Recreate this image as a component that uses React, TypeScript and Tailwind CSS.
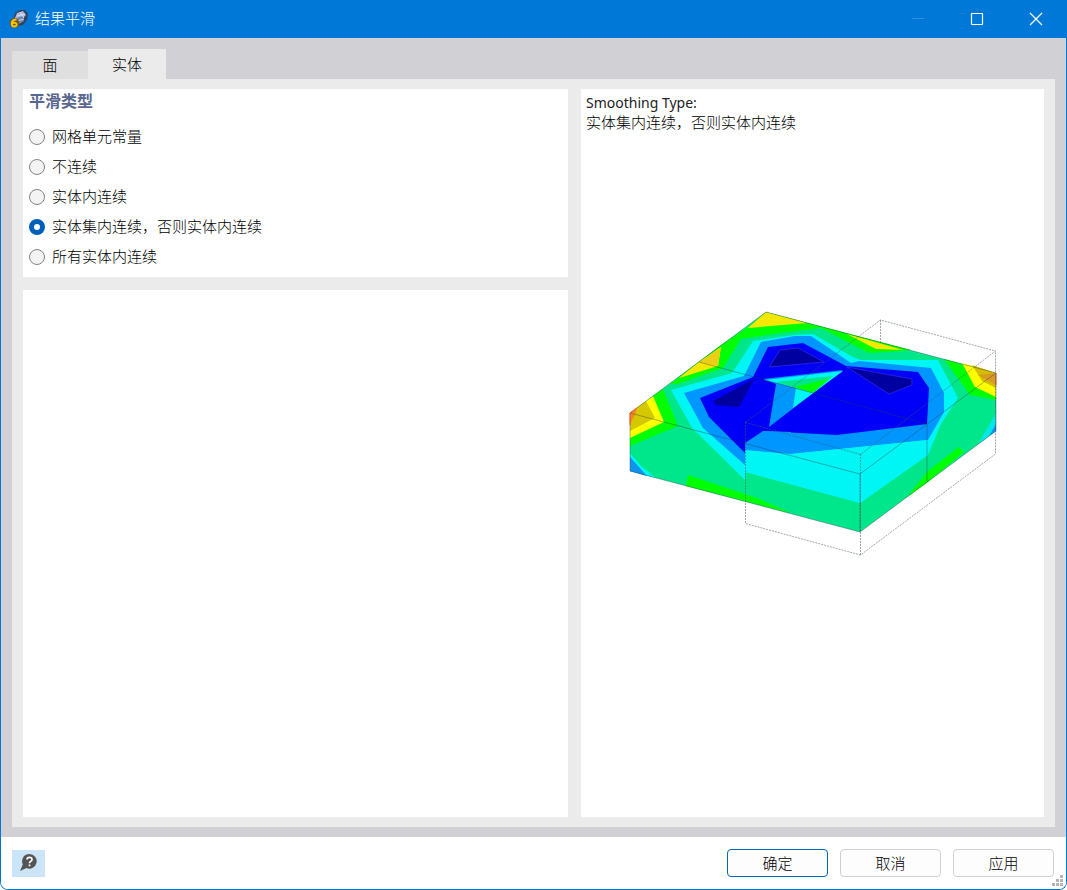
import { useState } from "react";

const smoothingTypes = [
  "网格单元常量",
  "不连续",
  "实体内连续",
  "实体集内连续，否则实体内连续",
  "所有实体内连续",
];

function AppIcon() {
  return (
    <svg className="size-5 shrink-0" viewBox="0 0 20 20" aria-hidden="true">
      <path d="M6 4 L11 1 L16 1 L19 5 L18 11 L14 16 L9 17 L4 11 Z" fill="#33415f" />
      <path d="M8 4 L14 2 L17 6 L13 10 L6 9 Z" fill="#aebbdc" />
      <path d="M7 9 L14 7 L15 12 L10 15 Z" fill="#7486b5" />
      <path d="M11 3 L15 9 M8 7 L16 5 M8 12 L15 10" stroke="#e2e8f5" strokeWidth="0.8" />
      <circle cx="5.5" cy="14" r="4.8" fill="#6b5a20" />
      <path d="M7.5 10.5 Q3 10.5 2.7 14.5 Q2.7 17.5 5.2 17.5 Q7.8 17.3 7.6 15 Q7.2 13 3.2 14.2" fill="none" stroke="#ffc60a" strokeWidth="1.8" />
    </svg>
  );
}

function TitleBar() {
  const control = "flex h-full w-[59px] items-center justify-center text-white";
  return (
    <header className="flex h-[38px] shrink-0 items-center bg-[#0078d7] pr-px pl-2 text-white">
      <AppIcon />
      <h1 className="ml-1.5 flex-1 text-[15px] leading-5">结果平滑</h1>
      <button aria-label="最小化" className={control} disabled>
        <svg className="size-3.5" viewBox="0 0 14 14"><path d="M1 6.5H13" stroke="#2f93e2" /></svg>
      </button>
      <button aria-label="最大化" className={control}>
        <svg className="size-3.5" viewBox="0 0 14 14"><rect x="1.5" y="1.5" width="11" height="11" rx="0.5" fill="none" stroke="currentColor" strokeWidth="1.2" /></svg>
      </button>
      <button aria-label="关闭" className={control}>
        <svg className="size-3.5" viewBox="0 0 14 14"><path d="M1 1L13 13M13 1L1 13" stroke="currentColor" strokeWidth="1.2" /></svg>
      </button>
    </header>
  );
}

function ContourPlot() {
  return (
    <svg className="w-[368px] max-w-full" viewBox="628 310 368 247" role="img" aria-label="平滑结果预览">
      <path d="M629 413L765 312L995 373V431L859 532L629 471Z" fill="#00e68a" />
      <g fill="#00ff00">
        <path d="M720 345L747 327L765 312L910 350L902 351L868 353L820 328L787 332L740 339L722 368L677 384H669Z" />
        <path d="M652 396L662 389L677 426L629 446V437L663 422Z" />
        <path d="M943 359L961 364L976 387L995 396V400L969 395Z" />
        <path d="M687 475L756 498L790 513L685 486Z" />
        <path d="M906 497L927 471L958 447L963 452L927 482Z" />
      </g>
      <g fill="#f5e800">
        <path d="M765 312L806 323L747 328Z" />
        <path d="M846 334L902 350L875 349Z" />
        <path d="M720 347L717 366L678 378L698 362Z" />
      </g>
      <g fill="#ffff00">
        <path d="M629 413L652 396L663 422L629 438Z" />
        <path d="M961 363L972 366L995 373V397L974 387Z" />
      </g>
      <path d="M720 347L717 366L699 362Z" fill="#ebce16" />
      <path d="M629 413L645 401L654 418L629 431Z" fill="#d5c800" />
      <path d="M971 365L995 373V388L981 381Z" fill="#d5bd00" />
      <path d="M629 413L636 408L634 415L629 424Z" fill="#f08a1c" />
      <path d="M977 375L995 373V385Z" fill="#d69a25" />
      <path d="M752 341L793 335L812 334L852 357L860 360L928 360L937 360L957 398L940 424L927 455L859 503L744 472L744 480L691 428L670 390L731 373Z" fill="#00f5f5" />
      <path d="M760 342L794 336H810L850 363L858 361L930 368L943 393V412L927 440L790 454L744 450V465L702 428L683 393L743 376Z" fill="#0096ff" />
      <path d="M767 347L802 343L845 366L917 372L928 388L926 424L836 435L762 431L744 453L708 417L699 398L752 377Z" fill="#0000f8" />
      <path d="M744 443L762 431L790 432V455L744 450Z" fill="#0096ff" />
      <path d="M744 450L790 454L859 447L927 440V455L859 503L744 472Z" fill="#00f5f5" />
      <path d="M762 379L842 370L768 427L775 384Z" fill="#0096ff" />
      <path d="M764 380L842 371L792 408L795 388Z" fill="#00f5f5" />
      <path d="M775 382L832 376L812 393Z" fill="#00e68a" />
      <path d="M793 387L828 379L812 393Z" fill="#00ff00" />
      <g fill="#0000a0" stroke="#4b3ff5" strokeWidth="0.5">
        <path d="M768 367L779 350L797 348L823 362Z" />
        <path d="M846 367L911 379V385L888 394Z" />
        <path d="M753 379L712 401L715 405L738 407Z" stroke="none" />
      </g>
      <path d="M629 453L640 466L655 478L629 471Z" fill="#00f5f5" />
      <path d="M629 457L646 476L629 471Z" fill="#1292ed" />
      <path d="M995 413V431L977 444Z" fill="#00e8e8" />
      <path d="M995 424V431L988 436Z" fill="#1292ed" />
      <path d="M629 471V413L765 312L995 373V431L859 532L629 471M629 413L859 474L995 373M859 474V532M698 362L926 424V482" fill="none" stroke="#243b50" strokeOpacity="0.55" strokeWidth="0.7" />
      <path d="M629 425V413L636 408M995 373V385" fill="none" stroke="#ff5a2a" />
      <g fill="none" stroke="#475762" strokeOpacity="0.75" strokeWidth="0.7" strokeDasharray="2 1">
        <path d="M744.5 422.5L879.5 320L994.5 351L859.5 454.5Z" />
        <path d="M744.5 422V523.5L859.5 555L994.5 454V351M859.5 454V555M879.5 320V343" />
      </g>
    </svg>
  );
}

export default function App() {
  const [tab, setTab] = useState("实体");
  const [selected, setSelected] = useState(3);
  const action = "h-7 w-[101px] rounded border bg-[#fdfdfd] pt-0.5 text-[15px]";
  return (
    <main className="flex min-h-screen flex-col overflow-hidden rounded-b-lg border-x border-b border-[#0078d7] bg-white font-['Liberation_Sans','Noto_Sans_CJK_SC',sans-serif] text-[15px] leading-5 font-light text-black">
      <TitleBar />
      <section className="flex flex-1 flex-col bg-[#d1d0d5] px-[11px] pt-[11px] pb-2.5">
        <div role="tablist" className="flex items-end">
          <button role="tab" aria-selected={tab === "面"} onClick={() => setTab("面")} className="h-7 w-[76px] bg-[#dfdfdf] pt-0.5">面</button>
          <button role="tab" aria-selected={tab === "实体"} onClick={() => setTab("实体")} className="h-[30px] w-[78px] bg-[#ebebeb] pt-0.5">实体</button>
        </div>
        <div className="grid flex-1 grid-cols-[545fr_463fr] gap-[13px] bg-[#ebebeb] px-[11px] py-2.5">
          <div className="flex flex-col gap-[13px]">
            <fieldset className="bg-white px-1.5 pb-[5px]">
              <legend className="float-left mb-2.5 w-full pt-[3px] text-base leading-5 font-bold text-[#58678f]">平滑类型</legend>
              <div className="clear-both flex flex-col">
                {smoothingTypes.map((label, index) => (
                  <label key={label} className="flex h-[30px] items-center gap-[7px]">
                    <input
                      type="radio"
                      name="smoothing"
                      checked={selected === index}
                      onChange={() => setSelected(index)}
                      className="size-4 appearance-none rounded-full border border-[#858585] bg-[#f3f3f3] checked:border-[5px] checked:border-[#005fb8] checked:bg-white"
                    />
                    {label}
                  </label>
                ))}
              </div>
            </fieldset>
            <div className="flex-1 bg-white" />
          </div>
          <div className="flex flex-col bg-white px-[5px] pt-1">
            <p className="font-['Noto_Sans',sans-serif] text-[14px] leading-5 font-normal text-[#222]">Smoothing Type:</p>
            <p>{smoothingTypes[selected]}</p>
            <div className="flex flex-1 items-center justify-center pb-[84px]">
              <ContourPlot />
            </div>
          </div>
        </div>
      </section>
      <footer className="relative flex h-[52px] shrink-0 items-center bg-white pr-3 pl-[11px]">
        <button aria-label="帮助" className="mr-auto flex h-[27px] w-[33px] items-center justify-center bg-[#cce4f7]">
          <svg className="size-5" viewBox="0 0 20 20">
            <path d="M10.5 1A7.3 7.3 0 1 1 7.5 15L1 18L3.8 11.5A7.3 7.3 0 0 1 10.5 1Z" fill="#555" />
            <path d="M8 6.5Q8.2 4.3 10.5 4.3Q13 4.3 13 6.5Q13 7.8 11.5 8.5Q10.5 9.1 10.5 10.3M10.5 11.6V13.3" fill="none" stroke="#fff" strokeWidth="1.7" />
          </svg>
        </button>
        <div className="flex gap-3">
          <button className={`${action} border-[#0067b8]`}>确定</button>
          <button className={`${action} border-[#d0d0d0]`}>取消</button>
          <button className={`${action} border-[#d0d0d0]`}>应用</button>
        </div>
        <svg className="absolute right-0.5 bottom-0.5 size-3" viewBox="0 0 12 12" fill="#b5b5b5" aria-hidden="true">
          <path d="M8 0H11V3H8ZM4 4H7V7H4ZM8 4H11V7H8ZM0 8H3V11H0ZM4 8H7V11H4ZM8 8H11V11H8Z" />
        </svg>
      </footer>
    </main>
  );
}
